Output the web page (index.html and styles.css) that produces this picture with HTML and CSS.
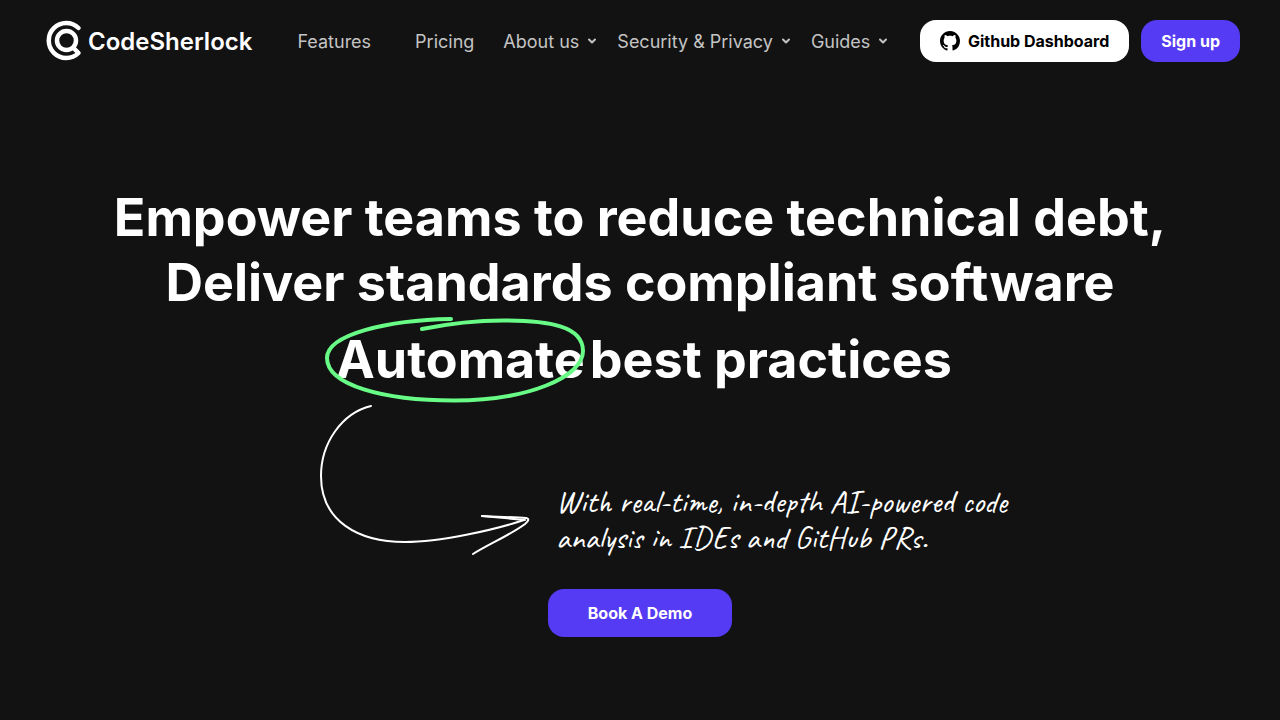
FILE: index.html
```html
<!DOCTYPE html>
<html lang="en">
<head>
  <meta charset="UTF-8">
  <meta name="viewport" content="width=device-width, initial-scale=1.0">
  <title>CodeSherlock</title>
  <link rel="stylesheet" href="styles.css">
</head>
<body>

  <header class="header">
    <a class="brand" href="#">
      <svg class="brand-icon" viewBox="0 0 36 42" aria-hidden="true">
        <path d="M32.500 8A17.500 17.500 0 1 0 32.500 33L28 28.500"/>
        <circle cx="20.500" cy="20.500" r="9.500"/>
      </svg>
      <span>CodeSherlock</span>
    </a>

    <nav class="nav">
      <a class="nav-link wide" href="#">Features</a>
      <a class="nav-link pricing" href="#">Pricing</a>
      <button class="nav-link" type="button">About us
        <svg class="chevron" viewBox="0 0 10 10" aria-hidden="true"><path d="M2 3.500L5 6.500L8 3.500"/></svg>
      </button>
      <button class="nav-link" type="button">Security &amp; Privacy
        <svg class="chevron" viewBox="0 0 10 10" aria-hidden="true"><path d="M2 3.500L5 6.500L8 3.500"/></svg>
      </button>
      <button class="nav-link" type="button">Guides
        <svg class="chevron" viewBox="0 0 10 10" aria-hidden="true"><path d="M2 3.500L5 6.500L8 3.500"/></svg>
      </button>
    </nav>

    <div class="actions">
      <a class="btn btn-light" href="#">
        <svg class="github" viewBox="0 0 16 16" aria-hidden="true"><path d="M8 0C3.580 0 0 3.580 0 8c0 3.540 2.290 6.530 5.470 7.590.4.070.55-.17.55-.38 0-.19-.01-.82-.01-1.490-2.010.37-2.530-.49-2.690-.94-.09-.23-.48-.94-.82-1.130-.28-.15-.68-.52-.01-.53.63-.01 1.080.58 1.230.82.72 1.210 1.870.87 2.330.66.070-.52.28-.87.51-1.070-1.780-.2-3.640-.89-3.640-3.950 0-.87.31-1.590.82-2.150-.08-.2-.36-1.020.08-2.120 0 0 .67-.21 2.200.82.64-.18 1.320-.27 2-.27s1.360.09 2 .27c1.530-1.040 2.200-.82 2.200-.82.44 1.100.16 1.920.08 2.120.51.56.82 1.270.82 2.150 0 3.070-1.870 3.750-3.650 3.950.29.25.54.73.54 1.480 0 1.070-.01 1.930-.01 2.200 0 .21.15.46.55.38A8.010 8.010 0 0 0 16 8c0-4.420-3.580-8-8-8z"/></svg>
        Github Dashboard
      </a>
      <a class="btn" href="#">Sign up</a>
    </div>
  </header>

  <main class="hero">
    <h1 class="title">
      <span class="line">Empower teams to reduce technical debt,</span>
      <span class="line">Deliver standards compliant software</span>
      <span class="line last">
        <span class="circled">Automate
          <svg class="circle" viewBox="0 0 264 90" aria-hidden="true">
            <path d="M128 4C66 5 4 19 4 43C4 70 60 85.500 131 85.500C205 85.500 260 62 260 36C260 11 226 5.500 180 5.500C151 5.500 124 9 99 14"/>
          </svg>
        </span>
        <span>best practices</span>
      </span>
    </h1>

    <div class="note">
      <svg class="arrow" viewBox="0 0 214 154" aria-hidden="true">
        <path d="M53 4C24 11 3 41 3 74C3 119 40 140 87 140C122 140 176 128 206 118"/>
        <path d="M164 114L207 118"/>
        <path d="M164 114C180 115 196 115 208 116Q213 117 207 122C194 132 169 143 155 152"/>
      </svg>
      <p class="note-text">With real-time, in-depth AI-powered code analysis in IDEs and GitHub PRs.</p>
    </div>

    <a class="btn demo" href="#">Book A Demo</a>
  </main>

</body>
</html>
```

FILE: styles.css
```css
* {
  box-sizing: border-box;
}

body {
  margin: 0;
  background-color: #121212;
  color: #fff;
  font-family: Inter, "Liberation Sans", sans-serif;
}

a {
  color: inherit;
  text-decoration: none;
}

.header {
  display: flex;
  align-items: center;
  padding: 20px 40px;
}

.brand {
  display: flex;
  align-items: center;
  gap: 6px;
  padding-left: 6px;
  font-size: 24px;
  font-weight: 600;
}

.brand-icon {
  width: 36px;
  height: 42px;
  fill: none;
  stroke: #fff;
  stroke-width: 4.500;
  stroke-linecap: round;
  stroke-linejoin: round;
}

.nav {
  display: flex;
  align-items: center;
  gap: 20px;
  margin-left: 45px;
}

.nav-link {
  display: flex;
  align-items: center;
  gap: 8px;
  padding: 0;
  border: none;
  background: none;
  color: #c4c4c4;
  font-family: inherit;
  font-size: 18px;
  white-space: nowrap;
  cursor: pointer;
}

.wide {
  margin-right: 24px;
}

.pricing {
  margin-right: 9px;
}

.chevron {
  width: 10px;
  height: 10px;
  fill: none;
  stroke: #c4c4c4;
  stroke-width: 2;
  stroke-linecap: round;
  stroke-linejoin: round;
}

.actions {
  display: flex;
  gap: 12px;
  margin-left: auto;
}

.btn {
  display: flex;
  align-items: center;
  justify-content: center;
  gap: 8px;
  height: 42px;
  padding: 0 20px;
  border-radius: 16px;
  background-color: #553bf3;
  font-size: 16px;
  font-weight: 700;
  white-space: nowrap;
}

.btn-light {
  background-color: #fff;
  color: #000;
}

.github {
  width: 20px;
  height: 20px;
}

.hero {
  display: flex;
  flex-direction: column;
  align-items: center;
  padding: 103px 40px 80px;
}

.title {
  margin: 0;
  font-size: 52px;
  font-weight: 700;
  line-height: 65px;
  text-align: center;
}

.line {
  display: block;
}

.last {
  display: flex;
  justify-content: center;
  gap: 5px;
  padding: 12px 0 0 8px;
}

.circled {
  position: relative;
}

/* hand-drawn ring over the word */
.circle {
  position: absolute;
  top: -12px;
  left: -13px;
  width: 264px;
  height: 90px;
  fill: none;
  stroke: #68fb86;
  stroke-width: 4;
  stroke-linecap: round;
}

.note {
  display: flex;
  align-items: flex-end;
  gap: 24px;
  margin-top: 10px;
  padding-left: 56px;
}

.arrow {
  flex-shrink: 0;
  width: 214px;
  height: 154px;
  fill: none;
  stroke: #fff;
  stroke-width: 2;
  stroke-linecap: round;
}

.note-text {
  max-width: 462px;
  margin: 0;
  font-family: "Bradley Hand", Caveat, cursive;
  font-size: 32px;
  line-height: 36px;
}

.demo {
  height: 48px;
  margin-top: 33px;
  padding: 0 40px;
}
```
